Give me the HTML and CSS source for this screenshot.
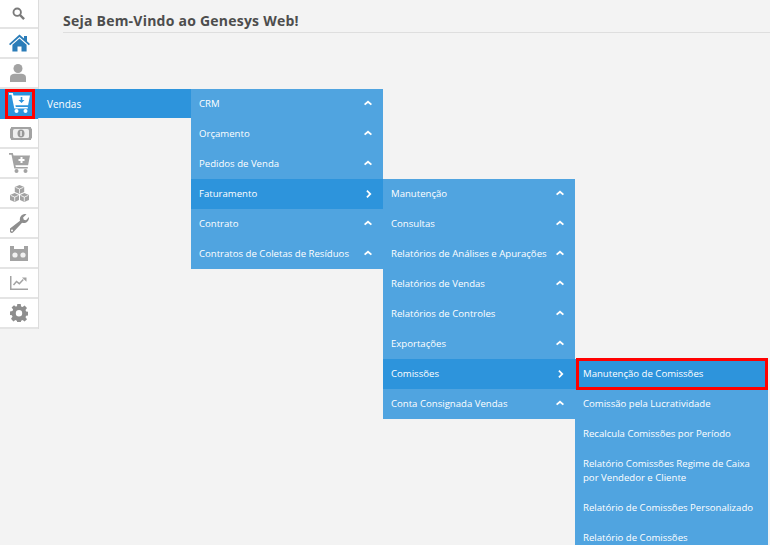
FILE: index.html
```html
<!DOCTYPE html>
<html lang="pt-BR">
<head>
<meta charset="utf-8">
<title>Genesys Web</title>
<link rel="stylesheet" href="styles.css">
</head>
<body>
<div class="page">
  <nav class="rail">
    <a class="cell"><svg class="ic-search" width="13" height="13" viewBox="0 0 14 14"><circle cx="5.6" cy="5.6" r="4" fill="none" stroke="#7a7a7a" stroke-width="2"/><path d="M8.6 8.6 13 13" stroke="#7a7a7a" stroke-width="2.6"/></svg></a>
    <a class="cell"><svg class="ic-home" width="21" height="18" viewBox="0 0 21 17"><path d="M10.5 0 0 9.500l1.200 1.300 9.300-8.200 9.300 8.200L21 9.500l-3-2.700V1.500h-3v2.600z" fill="#2a7cb8"/><path d="M10.500 4 3.400 10.200V17H8.500v-5h4v5h5.100v-6.800z" fill="#2a7cb8"/></svg></a>
    <a class="cell"><svg class="ic-person" width="16" height="18" viewBox="0 0 16 18"><circle cx="8" cy="4.500" r="4.500" fill="#a3a3a3"/><path d="M0 18v-4.500C0 11 2.200 9.800 4.500 9.800h7c2.300 0 4.500 1.200 4.500 3.700V18z" fill="#a3a3a3"/></svg></a>
    <a class="cell cell-on"><svg class="ic-cart" width="21" height="20" viewBox="0 0 21 20"><path d="M0 0h3.800l.7 2.500H21l-1.900 9.700H6.400l.4 1.700h12v1.700H5.300L2.500 1.800H0z" fill="#fff"/><circle cx="7.500" cy="18" r="2" fill="#fff"/><circle cx="16.500" cy="18" r="2" fill="#fff"/><path d="M11.700 4v3H9.500l3 3 3-3h-2.200V4z" fill="#2d94dc"/></svg></a>
    <a class="cell"><svg class="ic-money" width="22" height="13" viewBox="0 0 22 13"><path d="M1 0h20v1a2 2 0 0 0 1 1v9a2 2 0 0 0-1 1v1H1v-1a2 2 0 0 0-1-1V2a2 2 0 0 0 1-1z" fill="#a3a3a3"/><rect x="3" y="2" width="16" height="9" rx="1.500" fill="#eee"/><ellipse cx="11" cy="6.500" rx="3.500" ry="4" fill="#999"/><rect x="10.300" y="4" width="1.500" height="5" fill="#eee"/></svg></a>
    <a class="cell"><svg class="ic-cart" width="21" height="20" viewBox="0 0 21 20"><path d="M0 0h3.800l.7 2.500H21l-1.900 9.700H6.400l.4 1.700h12v1.700H5.300L2.500 1.800H0z" fill="#a3a3a3"/><circle cx="7.500" cy="18" r="2" fill="#a3a3a3"/><circle cx="16.500" cy="18" r="2" fill="#a3a3a3"/><path d="M11.500 4v2h-2v2h2v2h2V8h2V6h-2V4z" fill="#fff"/></svg></a>
    <a class="cell"><svg width="19" height="17" viewBox="0 0 19 17"><g fill="#a3a3a3"><path d="m9.500 0 4.700 2v5L9.500 9 4.800 7V2z"/><path d="m4.700 8 4.300 1.900v5L4.700 17 0 15V10z"/><path d="m14.300 8 4.700 2v5l-4.700 2-4.300-2.100v-5z"/></g><g fill="none" stroke="#fff" stroke-width=".8"><path d="m5.500 2.300 4 1.700 4-1.700M9.500 4v4.500"/><path d="M.7 10.400l4 1.700 3.800-1.700M4.700 12v4.500"/><path d="M10.500 10.400l3.800 1.700 4-1.700M14.300 12v4.500"/></g></svg></a>
    <a class="cell"><svg width="19" height="19" viewBox="0 0 19 19"><path d="M19 3.800c0 3-2.400 5.300-5.300 5.300-.6 0-1.100-.1-1.600-.3L3.500 18a2.400 2.400 0 0 1-3.500 0 2.400 2.400 0 0 1 0-3.400L10 6.700a5.300 5.300 0 0 1 6.500-6.500l-3.400 3.300.7 2.200 2.200.6L19 3z" fill="#8e8e8e"/><circle cx="2" cy="16.500" r="1" fill="#fff"/></svg></a>
    <a class="cell"><svg width="18" height="15" viewBox="0 0 18 15"><path d="M0 0h4v3h10V0h4v15H0z" fill="#a3a3a3"/><circle cx="5" cy="9" r="2.600" fill="#f2f2f2"/><circle cx="13" cy="9" r="2.600" fill="#f2f2f2"/></svg></a>
    <a class="cell"><svg width="18" height="14" viewBox="0 0 18 14"><path d="M0 0h1.500v12.500H18V14H0z" fill="#a3a3a3"/><path d="m3.500 9 3-3.500 2.800 2.200 4-4.200" fill="none" stroke="#a3a3a3" stroke-width="1.500"/><path d="M12 1.500h4.500v4.300z" fill="#a3a3a3"/></svg></a>
    <a class="cell"><svg width="18" height="18" viewBox="0 0 18 18"><path fill-rule="evenodd" d="M7.300 0h3.400l.4 2.500 1.500.6 2-1.500 2.400 2.400-1.500 2 .6 1.500 2.400.4v3.400l-2.400.4-.6 1.500 1.500 2-2.400 2.400-2-1.500-1.500.6-.4 2.400H7.300l-.4-2.400-1.500-.6-2 1.500L1 14.800l1.500-2-.6-1.500L0 10.900V7.500l2.500-.4.600-1.500-1.500-2L4 1.200l2 1.500 1-.6zM9 6a3.200 3.200 0 1 0 0 6.400A3.200 3.200 0 0 0 9 6z" fill="#8e8e8e"/></svg></a>
  </nav>

  <main class="content">
    <h1 class="title">Seja Bem-Vindo ao Genesys Web!</h1>
  </main>

  <div class="band">Vendas</div>

  <ul class="menu menu-1">
    <li class="item">CRM<svg class="up" width="8" height="6" viewBox="0 0 8 6"><path d="M0 4 4 .5 8 4 6.800 5.200 4 2.900 1.200 5.200z" fill="#fff"/></svg></li>
    <li class="item">Orçamento<svg class="up" width="8" height="6" viewBox="0 0 8 6"><path d="M0 4 4 .5 8 4 6.800 5.200 4 2.900 1.200 5.200z" fill="#fff"/></svg></li>
    <li class="item">Pedidos de Venda<svg class="up" width="8" height="6" viewBox="0 0 8 6"><path d="M0 4 4 .5 8 4 6.800 5.200 4 2.900 1.200 5.200z" fill="#fff"/></svg></li>
    <li class="item item-on">Faturamento<svg class="right" width="6" height="8" viewBox="0 0 6 8"><path d="M1.500 0 5.500 4l-4 4L.3 6.800 3 4 .3 1.200z" fill="#fff"/></svg></li>
    <li class="item">Contrato<svg class="up" width="8" height="6" viewBox="0 0 8 6"><path d="M0 4 4 .5 8 4 6.800 5.200 4 2.900 1.200 5.200z" fill="#fff"/></svg></li>
    <li class="item">Contratos de Coletas de Resíduos<svg class="up" width="8" height="6" viewBox="0 0 8 6"><path d="M0 4 4 .5 8 4 6.800 5.200 4 2.900 1.200 5.200z" fill="#fff"/></svg></li>
  </ul>

  <ul class="menu menu-2">
    <li class="item">Manutenção<svg class="up" width="8" height="6" viewBox="0 0 8 6"><path d="M0 4 4 .5 8 4 6.800 5.200 4 2.900 1.200 5.200z" fill="#fff"/></svg></li>
    <li class="item">Consultas<svg class="up" width="8" height="6" viewBox="0 0 8 6"><path d="M0 4 4 .5 8 4 6.800 5.200 4 2.900 1.200 5.200z" fill="#fff"/></svg></li>
    <li class="item">Relatórios de Análises e Apurações<svg class="up" width="8" height="6" viewBox="0 0 8 6"><path d="M0 4 4 .5 8 4 6.800 5.200 4 2.900 1.200 5.200z" fill="#fff"/></svg></li>
    <li class="item">Relatórios de Vendas<svg class="up" width="8" height="6" viewBox="0 0 8 6"><path d="M0 4 4 .5 8 4 6.800 5.200 4 2.900 1.200 5.200z" fill="#fff"/></svg></li>
    <li class="item">Relatórios de Controles<svg class="up" width="8" height="6" viewBox="0 0 8 6"><path d="M0 4 4 .5 8 4 6.800 5.200 4 2.900 1.200 5.200z" fill="#fff"/></svg></li>
    <li class="item">Exportações<svg class="up" width="8" height="6" viewBox="0 0 8 6"><path d="M0 4 4 .5 8 4 6.800 5.200 4 2.900 1.200 5.200z" fill="#fff"/></svg></li>
    <li class="item item-on">Comissões<svg class="right" width="6" height="8" viewBox="0 0 6 8"><path d="M1.500 0 5.500 4l-4 4L.3 6.800 3 4 .3 1.200z" fill="#fff"/></svg></li>
    <li class="item">Conta Consignada Vendas<svg class="up" width="8" height="6" viewBox="0 0 8 6"><path d="M0 4 4 .5 8 4 6.800 5.200 4 2.900 1.200 5.200z" fill="#fff"/></svg></li>
  </ul>

  <ul class="menu menu-3">
    <li class="item item-on">Manutenção de Comissões</li>
    <li class="item">Comissão pela Lucratividade</li>
    <li class="item">Recalcula Comissões por Período</li>
    <li class="item">Relatório Comissões Regime de Caixa por Vendedor e Cliente</li>
    <li class="item">Relatório de Comissões Personalizado</li>
    <li class="item">Relatório de Comissões</li>
  </ul>

  <div class="mark mark-cart"></div>
  <div class="mark mark-item"></div>
</div>
</body>
</html>
```

FILE: styles.css
```css
* { box-sizing: border-box; }
html, body { margin: 0; padding: 0; height: 100%; overflow: hidden; }
body { background: #f3f3f3; font-family: "Open Sans", sans-serif; }
.page { position: relative; width: 770px; height: 545px; overflow: hidden; display: flex; align-items: flex-start; }

.rail { width: 39px; flex: none; background: #fff; border-right: 1px solid #dcdcdc; display: flex; flex-direction: column; }
.cell { height: 30px; display: flex; align-items: center; justify-content: center; border-bottom: 2px solid #e4e4e4; }
.cell:first-child { height: 29px; }
.cell-on { background: #2d94dc; border-bottom-color: #2d94dc; }
.ic-search { margin: 0 2px 1px 0; }
.ic-home { margin-left: 1px; }
.ic-person { margin-right: 2px; }
.ic-cart { margin-left: 1px; }
.ic-money { margin-left: 4px; }

.content { flex: 1; padding: 12px 0 0 24px; }
.title { margin: 0; height: 21px; font-size: 14px; line-height: 17px; font-weight: 700; color: #4d4d4d; border-bottom: 1px solid #dedede; letter-spacing: .23px; }

.band { position: absolute; left: 38px; top: 89px; width: 153px; height: 29px; padding-left: 9px; background: #2d94dc; color: #fff; font-size: 10px; line-height: 31px; }

.menu { position: absolute; margin: 0; padding: 0; list-style: none; background: #50a4e0; color: #fff; font-size: 9.6px; line-height: 14px; }
.menu-1 { left: 191px; top: 89px; width: 192px; }
.menu-2 { left: 383px; top: 179px; width: 192px; }
.menu-3 { left: 575px; top: 359px; width: 193px; }

.item { position: relative; min-height: 30px; padding: 8px; }
.item-on { background: #2d94dc; }
.up { position: absolute; right: 11px; top: 11px; }
.right { position: absolute; right: 11px; top: 11px; }

.mark { position: absolute; border: 3px solid #f00; z-index: 3; pointer-events: none; }
.mark-cart { left: 5px; top: 89px; width: 30px; height: 30px; }
.mark-item { left: 576px; top: 358px; width: 192px; height: 32px; }
```
